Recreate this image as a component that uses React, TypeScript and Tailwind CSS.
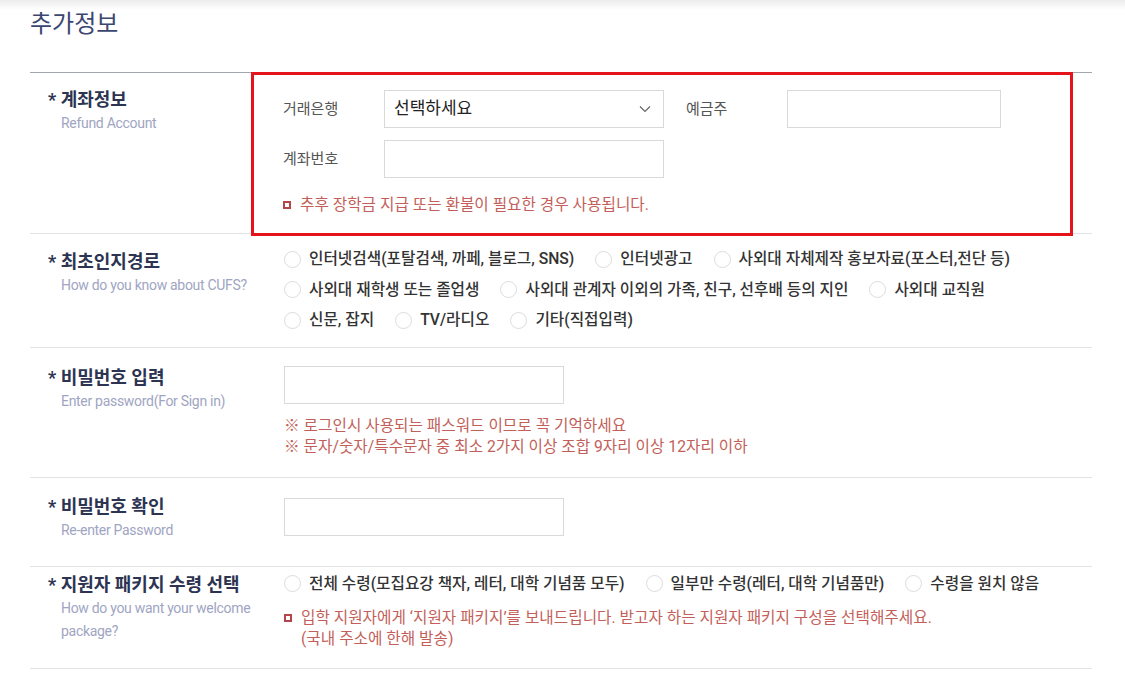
import { PropsWithChildren } from "react";

const font = "font-['Roboto','Noto_Sans_CJK_KR',sans-serif]";

const Title = ({ ko, en }: { ko: string; en: string }) => (
  <div className="w-[221px] shrink-0 pl-[18px]">
    <h3 className="text-[18px] leading-[24px] font-bold text-[#2c3452]">
      * {ko}
    </h3>
    <p className="w-[215px] pl-[13px] text-[14px] leading-[23px] tracking-[-0.3px] text-[#a0a5c2]">
      {en}
    </p>
  </div>
);

const Row = ({ children, className = "" }: PropsWithChildren<{ className?: string }>) => (
  <div className={`flex border-b border-[#e3e3e3] ${className}`}>{children}</div>
);

const Radio = ({ label }: { label: string }) => (
  <label className="mr-[21px] flex items-center">
    <span className="mr-[8px] h-[17px] w-[17px] shrink-0 rounded-full border border-[#dcdcdc] bg-white" />
    <span>{label}</span>
  </label>
);

const RadioLine = ({ items }: { items: string[] }) => (
  <div className="flex h-[30.5px] items-center">
    {items.map((s) => (
      <Radio key={s} label={s} />
    ))}
  </div>
);

const Bullet = () => (
  <span className="mr-[9px] mt-[7px] inline-block h-[8px] w-[8px] shrink-0 border-2 border-[#b4454a]" />
);

const Input = ({ w }: { w: string }) => (
  <div className={`h-[38px] border border-[#d9d9d9] bg-white ${w}`} />
);

const sources = [
  "인터넷검색(포탈검색, 까페, 블로그, SNS)",
  "인터넷광고",
  "사외대 자체제작 홍보자료(포스터,전단 등)",
  "사외대 재학생 또는 졸업생",
  "사외대 관계자 이외의 가족, 친구, 선후배 등의 지인",
  "사외대 교직원",
  "신문, 잡지",
  "TV/라디오",
  "기타(직접입력)",
];

function App() {
  return (
    <div className={`min-h-screen w-full bg-white ${font}`}>
      <div className="h-[10px] bg-gradient-to-b from-[#ececec] to-white" />
      <div className="w-[1092px] pl-[30px]">
        <h2 className="text-[24px] leading-[28px] text-[#3b4770]">추가정보</h2>

        <div className="mt-[34px] border-t border-[#a3a7b0]">
          {/* 계좌정보 */}
          <Row className="h-[161px]">
            <div className="pt-[15px]">
              <Title ko="계좌정보" en="Refund Account" />
            </div>
            <div className="relative z-10 -mt-px mb-[-2px] h-[164px] w-[822px] border-[3px] border-[#e5141b] bg-white pl-[29px] pt-[15px] text-[15px] text-[#555]">
              <div className="flex items-center">
                <span className="w-[101px]">거래은행</span>
                <div className="flex h-[38px] w-[280px] items-center justify-between border border-[#d9d9d9] pl-[9px] pr-[12px] text-[17px] text-[#222]">
                  <span>선택하세요</span>
                  <svg width="12" height="8" viewBox="0 0 12 8" fill="none" stroke="#666" strokeWidth="1.2">
                    <path d="M1 1.5 6 6.5 11 1.5" />
                  </svg>
                </div>
                <span className="ml-[22px] w-[101px]">예금주</span>
                <Input w="w-[214px]" />
              </div>
              <div className="mt-[12px] flex items-center">
                <span className="w-[101px]">계좌번호</span>
                <Input w="w-[280px]" />
              </div>
              <div className="mt-[16px] flex text-[15.7px] leading-[21px] text-[#c35f5a]">
                <Bullet />
                <span>추후 장학금 지급 또는 환불이 필요한 경우 사용됩니다.</span>
              </div>
            </div>
          </Row>

          {/* 최초인지경로 */}
          <Row className="h-[114px] pt-[10px]">
            <div className="pt-[6px]">
              <Title ko="최초인지경로" en="How do you know about CUFS?" />
            </div>
            <div className="flex-1 pl-[33px] text-[15.7px] font-medium text-[#333]">
              <RadioLine items={sources.slice(0, 3)} />
              <RadioLine items={sources.slice(3, 6)} />
              <RadioLine items={sources.slice(6)} />
            </div>
          </Row>

          {/* 비밀번호 입력 */}
          <Row className="h-[130px] pt-[18px]">
            <Title ko="비밀번호 입력" en="Enter password(For Sign in)" />
            <div className="pl-[33px]">
              <Input w="w-[280px]" />
              <div className="mt-[11px] text-[15.7px] leading-[21px] text-[#c35f5a]">
                <p>※ 로그인시 사용되는 패스워드 이므로 꼭 기억하세요</p>
                <p>※ 문자/숫자/특수문자 중 최소 2가지 이상 조합 9자리 이상 12자리 이하</p>
              </div>
            </div>
          </Row>

          {/* 비밀번호 확인 */}
          <Row className="h-[89px] pt-[20px]">
            <div className="-mt-[3px]">
              <Title ko="비밀번호 확인" en="Re-enter Password" />
            </div>
            <div className="pl-[33px]">
              <Input w="w-[280px]" />
            </div>
          </Row>

          {/* 지원자 패키지 */}
          <Row className="h-[102px] pt-[5px]">
            <div className="pt-[1px]">
              <Title ko="지원자 패키지 수령 선택" en="How do you want your welcome package?" />
            </div>
            <div className="pl-[33px]">
              <div className="flex h-[24px] items-center text-[15.7px] font-medium text-[#333]">
                <Radio label="전체 수령(모집요강 책자, 레터, 대학 기념품 모두)" />
                <Radio label="일부만 수령(레터, 대학 기념품만)" />
                <Radio label="수령을 원치 않음" />
              </div>
              <div className="mt-[11px] flex text-[15.7px] leading-[21px] text-[#c35f5a]">
                <Bullet />
                <span>
                  입학 지원자에게 ‘지원자 패키지’를 보내드립니다. 받고자 하는 지원자 패키지 구성을 선택해주세요.
                  <br />
                  (국내 주소에 한해 발송)
                </span>
              </div>
            </div>
          </Row>
        </div>
      </div>
    </div>
  );
}

export default App;
